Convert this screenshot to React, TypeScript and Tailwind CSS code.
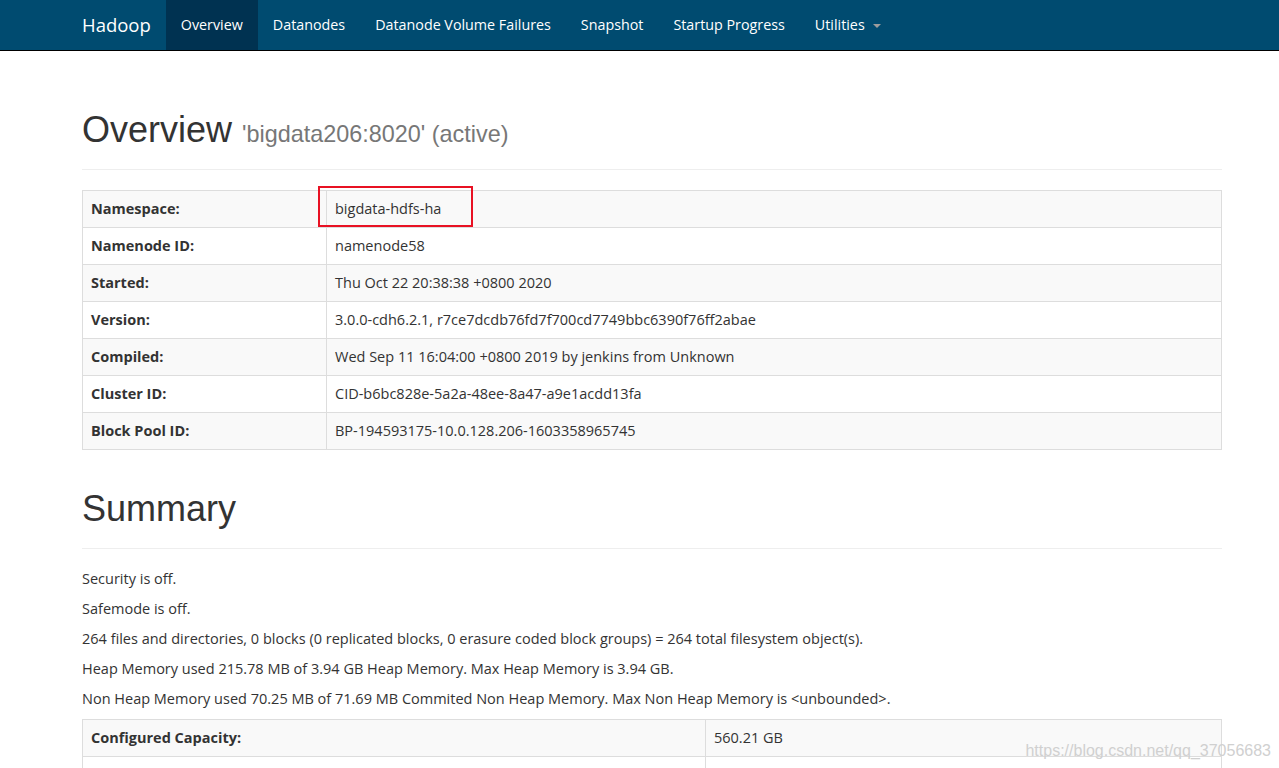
import { ReactNode } from 'react'

const navItems = ['Datanodes', 'Datanode Volume Failures', 'Snapshot', 'Startup Progress']

const overviewRows: [string, string][] = [
  ['Namespace:', 'bigdata-hdfs-ha'],
  ['Namenode ID:', 'namenode58'],
  ['Started:', 'Thu Oct 22 20:38:38 +0800 2020'],
  ['Version:', '3.0.0-cdh6.2.1, r7ce7dcdb76fd7f700cd7749bbc6390f76ff2abae'],
  ['Compiled:', 'Wed Sep 11 16:04:00 +0800 2019 by jenkins from Unknown'],
  ['Cluster ID:', 'CID-b6bc828e-5a2a-48ee-8a47-a9e1acdd13fa'],
  ['Block Pool ID:', 'BP-194593175-10.0.128.206-1603358965745'],
]

const summaryLines = [
  'Security is off.',
  'Safemode is off.',
  '264 files and directories, 0 blocks (0 replicated blocks, 0 erasure coded block groups) = 264 total filesystem object(s).',
  'Heap Memory used 215.78 MB of 3.94 GB Heap Memory. Max Heap Memory is 3.94 GB.',
  'Non Heap Memory used 70.25 MB of 71.69 MB Commited Non Heap Memory. Max Non Heap Memory is <unbounded>.',
]

function PageHeader({ children, top }: { children: ReactNode; top: string }) {
  return (
    <h1
      className={`${top} h-[60px] pb-[19px] mb-[20px] border-b border-[#eeeeee] text-[36px] leading-[40px] text-[#333333] font-normal whitespace-nowrap`}
      style={{ fontFamily: '"Liberation Sans", Arial, sans-serif' }}
    >
      {children}
    </h1>
  )
}

function InfoTable({ rows, labelWidth }: { rows: [string, string][]; labelWidth: string }) {
  return (
    <table className="w-full border-collapse border border-[#dddddd] text-[14.5px] leading-[20px] text-[#333333]">
      <tbody>
        {rows.map(([k, v], i) => (
          <tr key={i} className={i % 2 === 0 ? 'bg-[#f9f9f9]' : 'bg-white'}>
            <th className={`${labelWidth} h-[37px] border border-[#dddddd] px-2 py-2 text-left font-bold`}>{k}</th>
            <td className="h-[37px] border border-[#dddddd] px-2 py-2">{v}</td>
          </tr>
        ))}
      </tbody>
    </table>
  )
}

export default function App() {
  return (
    <div className="relative min-h-[768px] bg-white overflow-hidden" style={{ fontFamily: '"Open Sans", "Noto Sans", sans-serif' }}>
      {/* Navbar */}
      <nav className="h-[51px] bg-[#004b70] border-b border-black">
        <div className="ml-[67px] flex h-[50px] items-stretch text-white text-[14.3px]">
          <span className="px-[15px] flex items-center text-[18.5px]">Hadoop</span>
          <span className="px-[15px] flex items-center bg-[#003251]">Overview</span>
          {navItems.map((n) => (
            <span key={n} className="px-[15px] flex items-center">{n}</span>
          ))}
          <span className="px-[15px] flex items-center gap-[8px]">
            Utilities
            <span className="inline-block w-0 h-0 border-x-[4px] border-x-transparent border-t-[4px] border-t-[#9d9d9d] mt-[2px]" />
          </span>
        </div>
      </nav>

      <div className="ml-[82px] w-[1140px]">
        <PageHeader top="mt-[59px]">
          Overview{' '}
          <small className="text-[23.4px] leading-none text-[#777777]">'bigdata206:8020' (active)</small>
        </PageHeader>

        <div className="relative">
          <InfoTable rows={overviewRows} labelWidth="w-[244px]" />
          {/* highlight box */}
          <div className="absolute left-[236px] top-[-4px] w-[155px] h-[41px] border-2 border-[#e81123]" />
        </div>

        <PageHeader top="mt-[39px]">Summary</PageHeader>

        <div className="text-[14.5px] leading-[20px] text-[#333333]">
          {summaryLines.map((l) => (
            <p key={l} className="mb-[10px]">{l}</p>
          ))}
        </div>

        <InfoTable
          rows={[
            ['Configured Capacity:', '560.21 GB'],
            ['', ''],
          ]}
          labelWidth="w-[623px]"
        />
      </div>

      {/* watermark */}
      <div
        className="absolute right-[8px] top-[739px] text-[16px] text-[#d0d0d0]"
        style={{ fontFamily: '"Liberation Sans", Arial, sans-serif' }}
      >
        https://blog.csdn.net/qq_37056683
      </div>
    </div>
  )
}
